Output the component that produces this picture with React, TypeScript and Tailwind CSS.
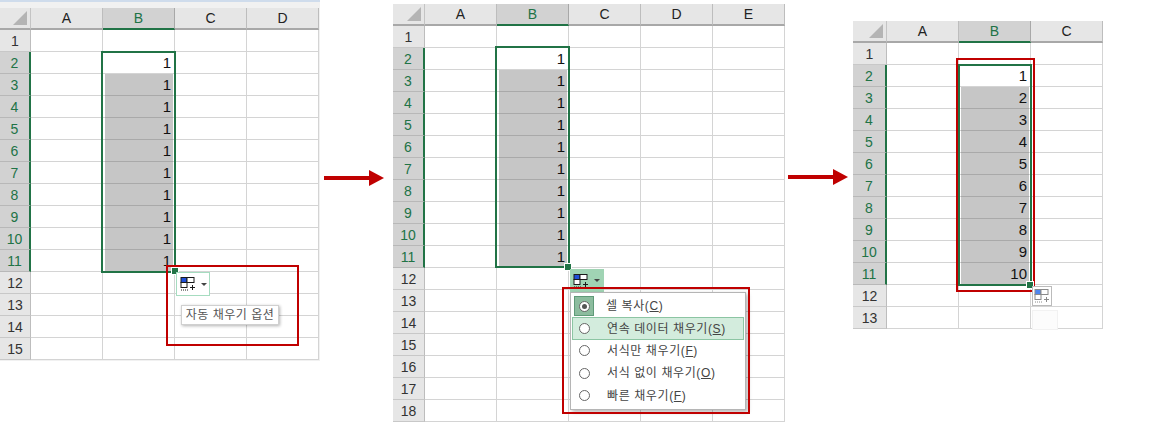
const FONT = "font-['Liberation_Sans','Noto_Sans_CJK_KR',sans-serif]"

function FillIcon({ faded }: { faded?: boolean }) {
  const ink = faded ? '#8a8a8a' : '#1a1a1a'
  const blue = faded ? '#4d86f0' : '#1f4fd8'
  return (
    <svg width="16" height="14" viewBox="0 0 16 14" className="shrink-0">
      <rect x="1" y="0.5" width="6" height="5" fill={blue} stroke={ink} />
      <rect x="7" y="0.5" width="7" height="5" fill="white" stroke={ink} />
      <rect x="1" y="5.5" width="6" height="5" fill="white" stroke={ink} />
      <path d="M1 13h1M3 13h1M5 13h1M7 13h1" stroke={ink} />
      <path d="M10 10.5h5M12.5 8v5" stroke={ink} />
    </svg>
  )
}

function Caret() {
  return <span className="border-x-[3px] border-t-[3px] border-x-transparent border-t-[#444] w-0 h-0" />
}

function Sheet({ cols, gridClass, rows, values, lastRow, children }: {
  cols: string[]
  gridClass: string
  rows: number
  values: (number | null)[]
  lastRow: number
  children?: React.ReactNode
}) {
  return (
    <div className="relative shrink-0">
      <div className={`grid ${gridClass} auto-rows-[22px]`}>
        <div className="bg-[#e6e6e6] border-r border-b-2 border-r-[#c4c4c4] border-b-[#a8a8a8] relative overflow-hidden">
          <div className="absolute right-[3px] bottom-[3px] w-0 h-0 border-l-[14px] border-t-[14px] border-l-transparent border-t-transparent border-b-0 border-r-[14px] border-r-[#b4b4b4] -ml-3" />
        </div>
        {cols.map((c) => (
          <div
            key={c}
            className={c === 'B'
              ? 'flex items-center justify-center bg-[#d2d2d2] border-r border-r-[#a8a8a8] border-b-2 border-b-[#217346] text-[14px] text-[#217346]'
              : 'flex items-center justify-center bg-[#e6e6e6] border-r border-r-[#bdbdbd] border-b-2 border-b-[#a8a8a8] text-[14px] text-[#222]'}
          >
            {c}
          </div>
        ))}
        {Array.from({ length: rows }, (_, i) => {
          const row = i + 1
          const on = row >= 2 && row <= lastRow
          return [
            <div
              key={`h${row}`}
              className={on
                ? 'flex items-center justify-center pt-px bg-[#d2d2d2] border-r-2 border-r-[#217346] border-b border-b-[#b8b8b8] text-[14px] text-[#217346]'
                : 'flex items-center justify-center pt-px bg-[#e6e6e6] border-r border-r-[#bdbdbd] border-b border-b-[#c8c8c8] text-[14px] text-[#333]'}
            >
              {row}
            </div>,
            ...cols.map((c) => {
              const v = c === 'B' && on ? values[row - 2] : null
              const filled = c === 'B' && on && row > 2
              return (
                <div key={c + row} className="border-r border-b border-[#d4d4d4] bg-white">
                  {v !== null && (
                    <div className={filled
                      ? 'h-[22px] -mb-px ml-[2px] mr-px flex items-center justify-end pt-px pr-[2px] bg-[#c6c6c6] border-b border-b-[#a9a9a9] text-[15px] text-[#111]'
                      : 'h-[21px] flex items-center justify-end pt-px pr-[3px] text-[15px] text-[#111]'}>
                      {v}
                    </div>
                  )}
                </div>
              )
            }),
          ]
        })}
      </div>
      {children}
    </div>
  )
}

function Arrow({ className }: { className: string }) {
  return (
    <svg width="62" height="16" viewBox="0 0 62 16" className={`shrink-0 ${className}`}>
      <path d="M1 6h45v-6l15 8-15 8v-6H1z" fill="#c00000" />
    </svg>
  )
}

function MenuRow({ label, hot, active }: { label: string; hot: string; active?: boolean }) {
  return (
    <div className={active
      ? 'h-[23px] mx-px flex items-center bg-[#d3ecdd] border border-[#8cc5a3]'
      : 'h-[23px] mx-px flex items-center border border-transparent'}>
      <span className="w-[11px] h-[11px] ml-[6px] mr-[17px] rounded-full border border-[#666] bg-white shrink-0" />
      <span className="text-[12px] text-[#444] tracking-[0.6px] whitespace-nowrap">{label}(<span className="underline">{hot}</span>)</span>
    </div>
  )
}

export default function App() {
  const ones = Array(10).fill(1)
  return (
    <div className={`flex w-[1149px] h-[425px] overflow-hidden bg-white ${FONT}`}>
      <div className="shrink-0 w-[320px] h-[361px] relative bg-[#f1f1f1] border-t-2 border-t-[#cfdcec]">
        <div className="pt-[6px]">
          <Sheet
            cols={['A', 'B', 'C', 'D']}
            gridClass="grid-cols-[31px_72px_72px_72px_72px]"
            rows={15}
            values={ones}
            lastRow={11}
          >
            <div className="absolute left-[101px] top-[43px] w-[75px] h-[222px] border-2 border-[#217346]" />
            <div className="absolute left-[172px] top-[260px] w-[6px] h-[6px] bg-[#217346] outline outline-white" />
            <div className="absolute left-[176px] top-[264px] w-[34px] h-[24px] bg-white border border-[#a6dcc0] flex items-center gap-[5px] pl-[3px]">
              <FillIcon />
              <Caret />
            </div>
            <div className="absolute left-[181px] top-[297px] w-[98px] h-[20px] bg-white border border-[#d0d0d0] shadow-[1px_1px_3px_rgba(0,0,0,0.3)] flex items-center justify-center text-[12px] text-[#555] tracking-[0.5px] whitespace-nowrap">
              자동 채우기 옵션
            </div>
            <div className="absolute left-[166px] top-[257px] w-[133px] h-[81px] border-2 border-[#c00000]" />
          </Sheet>
        </div>
      </div>
      <Arrow className="ml-[3px] mt-[170px]" />
      <div className="shrink-0 ml-[8px] pt-[4px] relative">
        <Sheet
          cols={['A', 'B', 'C', 'D', 'E']}
          gridClass="grid-cols-[32px_72px_72px_72px_72px_72px]"
          rows={18}
          values={ones}
          lastRow={11}
        >
          <div className="absolute left-[102px] top-[42px] w-[75px] h-[222px] border-2 border-[#217346]" />
          <div className="absolute left-[172px] top-[260px] w-[6px] h-[6px] bg-[#217346] outline outline-white" />
          <div className="absolute left-[177px] top-[265px] w-[34px] h-[23px] bg-[#a0d4b4] flex items-center gap-[5px] pl-[3px]">
            <FillIcon />
            <Caret />
          </div>
          <div className="absolute left-[177px] top-[288px] w-[176px] h-[118px] bg-white border border-[#b5b5b5] shadow-[2px_2px_4px_rgba(0,0,0,0.3)] pt-[2px] pb-[2px] flex flex-col">
            <div className="h-[23px] mx-px flex items-center">
              <span className="w-[20px] h-[20px] ml-[2px] mr-[12px] bg-[#8cbc9e] border border-[#5f9a78] flex items-center justify-center shrink-0">
                <span className="w-[11px] h-[11px] rounded-full border border-[#666] bg-white flex items-center justify-center">
                  <span className="w-[5px] h-[5px] rounded-full bg-[#555]" />
                </span>
              </span>
              <span className="text-[12px] text-[#444] tracking-[0.6px] whitespace-nowrap">셀 복사(<span className="underline">C</span>)</span>
            </div>
            <MenuRow label="연속 데이터 채우기" hot="S" active />
            <MenuRow label="서식만 채우기" hot="F" />
            <MenuRow label="서식 없이 채우기" hot="O" />
            <MenuRow label="빠른 채우기" hot="F" />
          </div>
          <div className="absolute left-[169px] top-[283px] w-[188px] h-[127px] border-2 border-[#c00000]" />
        </Sheet>
      </div>
      <Arrow className="ml-[2px] mt-[169px]" />
      <div className="shrink-0 ml-[4px] pt-[21px]">
        <Sheet
          cols={['A', 'B', 'C']}
          gridClass="grid-cols-[34px_72px_72px_72px]"
          rows={13}
          values={[1, 2, 3, 4, 5, 6, 7, 8, 9, 10]}
          lastRow={11}
        >
          <div className="absolute left-[105px] top-[43px] w-[74px] h-[222px] border-2 border-[#217346]" />
          <div className="absolute left-[103px] top-[37px] w-[79px] h-[234px] border-2 border-[#c00000]" />
          <div className="absolute left-[174px] top-[261px] w-[6px] h-[6px] bg-[#217346] outline outline-white" />
          <div className="absolute left-[179px] top-[265px] w-[20px] h-[20px] bg-white border border-[#bbb] flex items-center justify-center">
            <FillIcon faded />
          </div>
          <div className="absolute left-[179px] top-[289px] w-[26px] h-[20px] bg-[#fcfcfc] border border-[#f2f2f2]" />
        </Sheet>
      </div>
    </div>
  )
}
